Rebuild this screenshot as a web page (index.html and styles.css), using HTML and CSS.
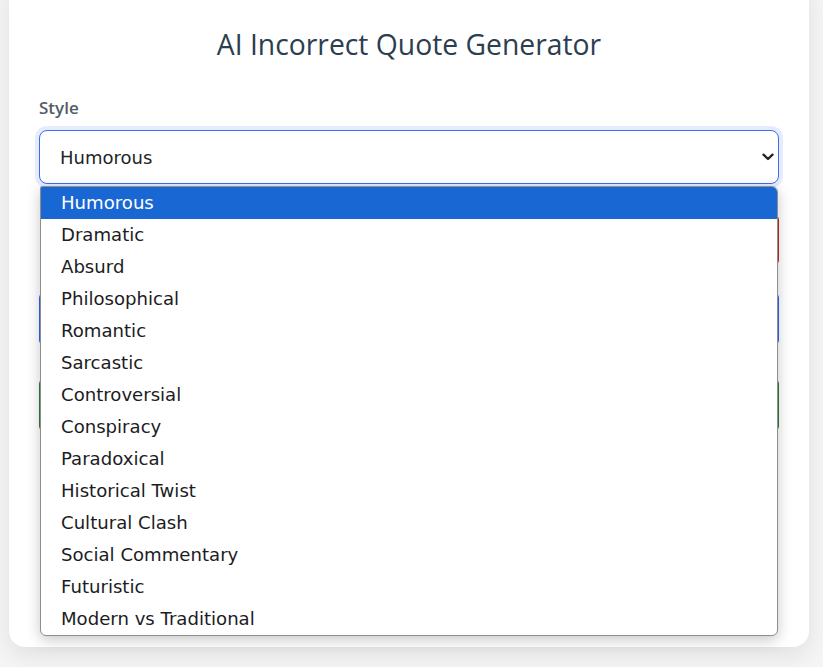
FILE: index.html
```html
<!DOCTYPE html>
<html lang="en">
<head>
<meta charset="utf-8">
<title>AI Incorrect Quote Generator</title>
<link rel="stylesheet" href="styles.css">
</head>
<body>
<main class="card">
  <h1 class="title">AI Incorrect Quote Generator</h1>
  <label class="field-label" for="style">Style</label>
  <div class="select-wrap">
    <select id="style" class="style-select">
      <option selected>Humorous</option>
      <option>Dramatic</option>
      <option>Absurd</option>
    </select>
    <svg class="chevron" width="12" height="8" viewBox="0 0 12 8" aria-hidden="true">
      <path d="M1.5 1.6 L6 6 L10.5 1.6" fill="none" stroke="#222222" stroke-width="2.3" stroke-linecap="round" stroke-linejoin="round"/>
    </svg>
  </div>
  <button class="btn btn-red" type="button">Generate Quote</button>
  <button class="btn btn-blue" type="button">Copy Quote</button>
  <button class="btn btn-green" type="button">Save Quote</button>
  <div class="output"></div>

  <ul class="dropdown" role="listbox">
    <li class="option selected">Humorous</li>
    <li class="option">Dramatic</li>
    <li class="option">Absurd</li>
    <li class="option">Philosophical</li>
    <li class="option">Romantic</li>
    <li class="option">Sarcastic</li>
    <li class="option">Controversial</li>
    <li class="option">Conspiracy</li>
    <li class="option">Paradoxical</li>
    <li class="option">Historical Twist</li>
    <li class="option">Cultural Clash</li>
    <li class="option">Social Commentary</li>
    <li class="option">Futuristic</li>
    <li class="option">Modern vs Traditional</li>
  </ul>
</main>
</body>
</html>
```
FILE: styles.css
```css
html, body {
  margin: 0;
  padding: 0;
}
body {
  background: #f5f5f5;
  font-family: "Open Sans", "Noto Sans", sans-serif;
  overflow: hidden;
  height: 667px;
}
.card {
  position: relative;
  box-sizing: border-box;
  width: 800px;
  margin: -20px 0 0 9px;
  padding: 47px 30px 32px;
  background: #ffffff;
  border-radius: 16px;
  box-shadow: 0 8px 24px rgba(0, 0, 0, 0.09);
  display: flex;
  flex-direction: column;
}
.title {
  margin: 0;
  font-size: 28.3px;
  line-height: 34px;
  font-weight: 400;
  color: #2c3e50;
  text-align: center;
}
.field-label {
  margin-top: 35px;
  font-size: 17px;
  line-height: 24px;
  font-weight: 600;
  color: #555b63;
}
.select-wrap {
  position: relative;
  margin-top: 10px;
  width: 740px;
  height: 54px;
}
.style-select {
  display: block;
  box-sizing: border-box;
  width: 740px;
  height: 54px;
  padding: 0 30px 0 20px;
  font-family: "DejaVu Sans", sans-serif;
  font-size: 18px;
  color: #212529;
  background: #ffffff;
  border: 1px solid #3a6df0;
  border-radius: 8px;
  box-shadow: 0 0 0 4px rgba(58, 109, 240, 0.13);
  outline: none;
  appearance: none;
  -webkit-appearance: none;
}
.chevron {
  position: absolute;
  right: 5px;
  top: 23px;
  pointer-events: none;
}
.btn {
  box-sizing: border-box;
  width: 740px;
  border: none;
  border-radius: 6px;
  color: #ffffff;
  font-family: inherit;
  font-size: 16px;
}
.btn-red {
  margin-top: 30px;
  margin-left: 1px;
  width: 739px;
  height: 52px;
  background: #c62828;
}
.btn-blue {
  margin-top: 26px;
  height: 54px;
  background: #2962ff;
}
.btn-green {
  margin-top: 32px;
  height: 54px;
  background: #2e7d32;
}
.output {
  height: 183px;
}
.dropdown {
  position: absolute;
  left: 31px;
  top: 206px;
  box-sizing: border-box;
  width: 738px;
  height: 450px;
  margin: 0;
  padding: 0;
  list-style: none;
  background: #ffffff;
  border: 1px solid #8e8e8e;
  border-radius: 2px 6px 6px 6px;
  box-shadow: 0 4px 14px rgba(0, 0, 0, 0.22);
  overflow: hidden;
  font-family: "DejaVu Sans", sans-serif;
  font-size: 18.1px;
  color: #1c1c24;
}
.option {
  height: 32px;
  line-height: 32px;
  padding-left: 20px;
  white-space: nowrap;
}
.option.selected {
  background: #1967d2;
  color: #ffffff;
}
```
